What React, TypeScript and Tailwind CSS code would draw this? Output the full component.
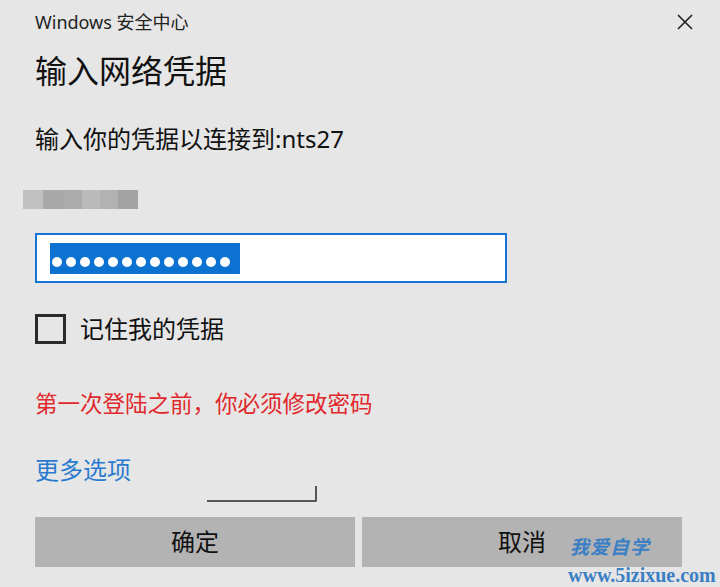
import React from 'react';

const sans = { fontFamily: '"Noto Sans", "Noto Sans CJK SC", sans-serif' };
const serif = { fontFamily: '"Liberation Serif", "Noto Sans CJK SC", serif' };

const blurCells: string[] = ['bg-[#c0c0c0] w-[20px]', 'bg-[#a9a9a9] w-[21px]', 'bg-[#ababab] w-[18px]', 'bg-[#bababa] w-[18px]', 'bg-[#b2b2b2] w-[18px]', 'bg-[#a3a3a3] w-[20px]'];

const App: React.FC = () => {
  return (
    <div className="relative w-[720px] h-[587px] overflow-hidden bg-[#e6e6e6] text-[#1a1a1a]" style={sans}>
      <div className="flex flex-col pl-[35px]">
        {/* header */}
        <div className="mt-[8px] h-[28px] flex items-center justify-between pr-[27px]">
          <span className="text-[18px] leading-none text-[#222]">Windows 安全中心</span>
          <svg width="16" height="16" viewBox="0 0 16 16" className="text-[#1f1f1f]">
            <path d="M1 1 L15 15 M15 1 L1 15" stroke="currentColor" strokeWidth="1.6" fill="none" />
          </svg>
        </div>

        <div className="mt-[14px] h-[42px] flex items-center text-[32px] leading-none text-[#111]">输入网络凭据</div>

        <div className="mt-[31px] h-[32px] flex items-center text-[24px] leading-none text-[#111]">
          输入你的凭据以连接到:nts27
        </div>

        {/* blurred user name */}
        <div className="mt-[35px] h-[19px] ml-[-12px] flex">
          {blurCells.map((c, i) => (
            <div key={i} className={`${c} h-full`} />
          ))}
        </div>

        {/* password box */}
        <div className="mt-[24px] w-[472px] h-[50px] border-2 border-[#1474d4] bg-white flex items-center pl-[13px]">
          <div className="w-[190px] h-[31px] bg-[#0b72d1] flex items-end pb-[7px] pl-[2px] gap-[4px]">
            {Array.from({ length: 13 }).map((_, i) => (
              <span key={i} className="w-[10px] h-[10px] rounded-full bg-white" />
            ))}
          </div>
        </div>

        {/* remember */}
        <div className="mt-[31px] h-[30px] flex items-center gap-[14px]">
          <div className="w-[31px] h-[30px] border-[3px] border-[#2b2b2b]" />
          <span className="text-[24px] leading-none text-[#111]">记住我的凭据</span>
        </div>

        <div className="mt-[45px] h-[30px] flex items-center text-[22.5px] leading-none text-[#e0282c]">
          第一次登陆之前，你必须修改密码
        </div>

        <div className="mt-[35px] h-[32px] flex items-center text-[24px] leading-none text-[#2a7bcf]">更多选项</div>

        <div className="ml-[172px] w-[110px] h-[16px] border-b-2 border-r-2 border-[#555] rounded-br-[2px]" />

        {/* buttons */}
        <div className="mt-[15px] flex gap-[7px]">
          <button className="w-[320px] h-[50px] bg-[#b3b3b3] text-[24px] leading-none text-[#111] flex items-center justify-center">
            确定
          </button>
          <button className="w-[320px] h-[50px] bg-[#b3b3b3] text-[24px] leading-none text-[#111] flex items-center justify-center">
            取消
          </button>
        </div>
      </div>

      {/* watermark */}
      <div className="absolute left-[570px] top-[535px] text-[19px] leading-[24px] font-bold italic tracking-[1px] text-[#3b7fc4]">
        我爱自学
      </div>
      <div className="absolute left-[568px] top-[563px] text-[20px] leading-[24px] font-bold text-[#3b7fc4]" style={serif}>
        www.5izixue.com
      </div>
    </div>
  );
};

export default App;
